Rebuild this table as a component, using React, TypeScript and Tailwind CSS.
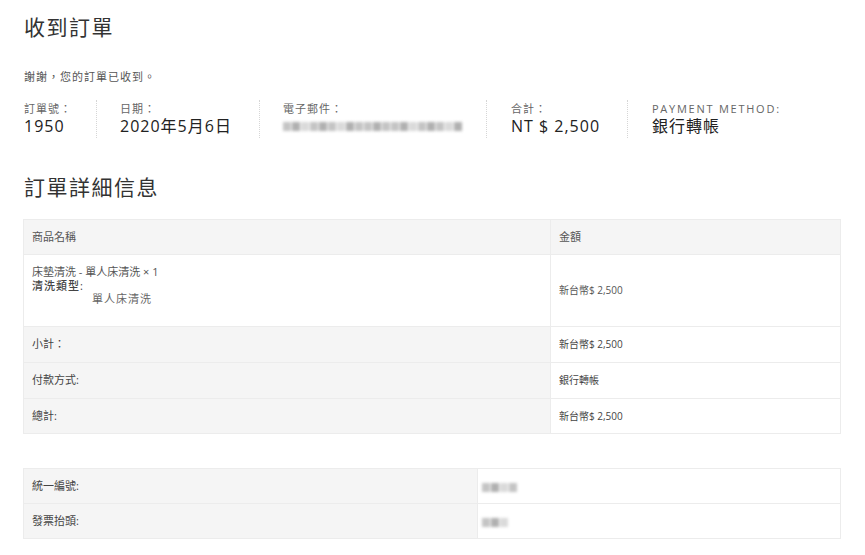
const font = "font-['Open_Sans','Noto_Sans_CJK_TC',sans-serif]";

function Blur({ w, shade = "bg-[#c4c4c4]" }: { w: number; shade?: string }) {
  // pixelated / blurred placeholder for hidden personal data
  const blocks = Math.round(w / 9);
  return (
    <span className="inline-flex items-center gap-[1px] blur-[1.5px]">
      {Array.from({ length: blocks }).map((_, i) => (
        <span
          key={i}
          className={`inline-block h-[9px] w-[8px] ${i % 3 === 1 ? "bg-[#b0b0b0]" : i % 4 === 2 ? "bg-[#dadada]" : shade}`}
        />
      ))}
    </span>
  );
}

const overview = [
  { label: "訂單號：", value: "1950", cls: "w-[73px]" },
  { label: "日期：", value: "2020年5月6日", cls: "w-[163px] pl-[23px]" },
  { label: "電子郵件：", value: null, cls: "w-[227px] pl-[23px]" },
  { label: "合計：", value: "NT $ 2,500", cls: "w-[141px] pl-[24px]" },
  { label: "PAYMENT METHOD:", value: "銀行轉帳", cls: "pl-[24px]", last: true },
];

const totals = [
  { label: "小計：", value: "新台幣$ 2,500", h: "h-[36px]" },
  { label: "付款方式:", value: "銀行轉帳", h: "h-[36px]" },
  { label: "總計:", value: "新台幣$ 2,500", h: "h-[35px]" },
];

export default function App() {
  return (
    <div className={`${font} min-h-[555px] w-[865px] bg-white pl-[23px] pr-[24px] pt-[12px] text-[#555]`}>
      <h1 className="ml-[1px] text-[21px] leading-[30px] tracking-[1.5px] text-[#333]">收到訂單</h1>

      <p className="ml-[1px] mt-[27px] text-[11px] leading-[16px] tracking-[1px] text-[#555]">謝謝，您的訂單已收到。</p>

      <ul className="ml-[1px] mt-[15px] flex">
        {overview.map((o) => (
          <li
            key={o.label}
            className={`${o.cls} ${o.last ? "" : "border-r border-dotted border-[#d6d6d6]"} flex h-[38px] flex-col justify-center`}
          >
            <span className={`text-[11px] leading-[15px] text-[#666] ${o.last ? "tracking-[1.75px]" : "tracking-[1px]"}`}>
              {o.label}
            </span>
            {o.value ? (
              <strong className="text-[16px] font-normal leading-[21px] tracking-[1px] text-[#222]">{o.value}</strong>
            ) : (
              <span className="flex h-[21px] items-center">
                <Blur w={180} />
              </span>
            )}
          </li>
        ))}
      </ul>

      <h2 className="ml-[1px] mt-[34px] text-[21px] leading-[30px] tracking-[1.5px] text-[#333]">訂單詳細信息</h2>

      <table className="mt-[17px] w-[818px] border-collapse text-left">
        <thead>
          <tr className="h-[35px] bg-[#f5f5f5]">
            <th className="w-[527px] border border-[#ececec] px-[8px] text-[11px] font-normal text-[#555]">商品名稱</th>
            <th className="border border-[#ececec] px-[8px] text-[11px] font-normal text-[#555]">金額</th>
          </tr>
        </thead>
        <tbody>
          <tr className="h-[72px]">
            <td className="border border-[#ececec] px-[8px] align-top pt-[9px]">
              <div className="text-[11px] leading-[15px] text-[#555]">床墊清洗 - 單人床清洗 × 1</div>
              <div className="text-[11px] font-medium leading-[13px] tracking-[1px] text-[#444]">清洗類型:</div>
              <div className="pl-[60px] text-[11px] leading-[14px] tracking-[1px] text-[#666]">單人床清洗</div>
            </td>
            <td className="border border-[#ececec] px-[8px] text-[10px] text-[#555]">新台幣$ 2,500</td>
          </tr>
        </tbody>
        <tfoot>
          {totals.map((t) => (
            <tr key={t.label} className={t.h}>
              <th className="border border-[#ececec] bg-[#f5f5f5] px-[8px] text-[11px] font-normal text-[#444]">{t.label}</th>
              <td className="border border-[#ececec] px-[8px] text-[10px] font-normal text-[#444]">{t.value}</td>
            </tr>
          ))}
        </tfoot>
      </table>

      <table className="mt-[34px] w-[818px] border-collapse text-left">
        <tbody>
          <tr className="h-[35px]">
            <th className="w-[454px] border border-[#ececec] bg-[#f5f5f5] px-[8px] text-[11px] font-normal text-[#444]">統一編號:</th>
            <td className="border border-[#ececec] px-[4px]">
              <Blur w={36} />
            </td>
          </tr>
          <tr className="h-[35px]">
            <th className="border border-[#ececec] bg-[#f5f5f5] px-[8px] text-[11px] font-normal text-[#444]">發票抬頭:</th>
            <td className="border border-[#ececec] px-[4px]">
              <Blur w={27} />
            </td>
          </tr>
        </tbody>
      </table>
    </div>
  );
}
